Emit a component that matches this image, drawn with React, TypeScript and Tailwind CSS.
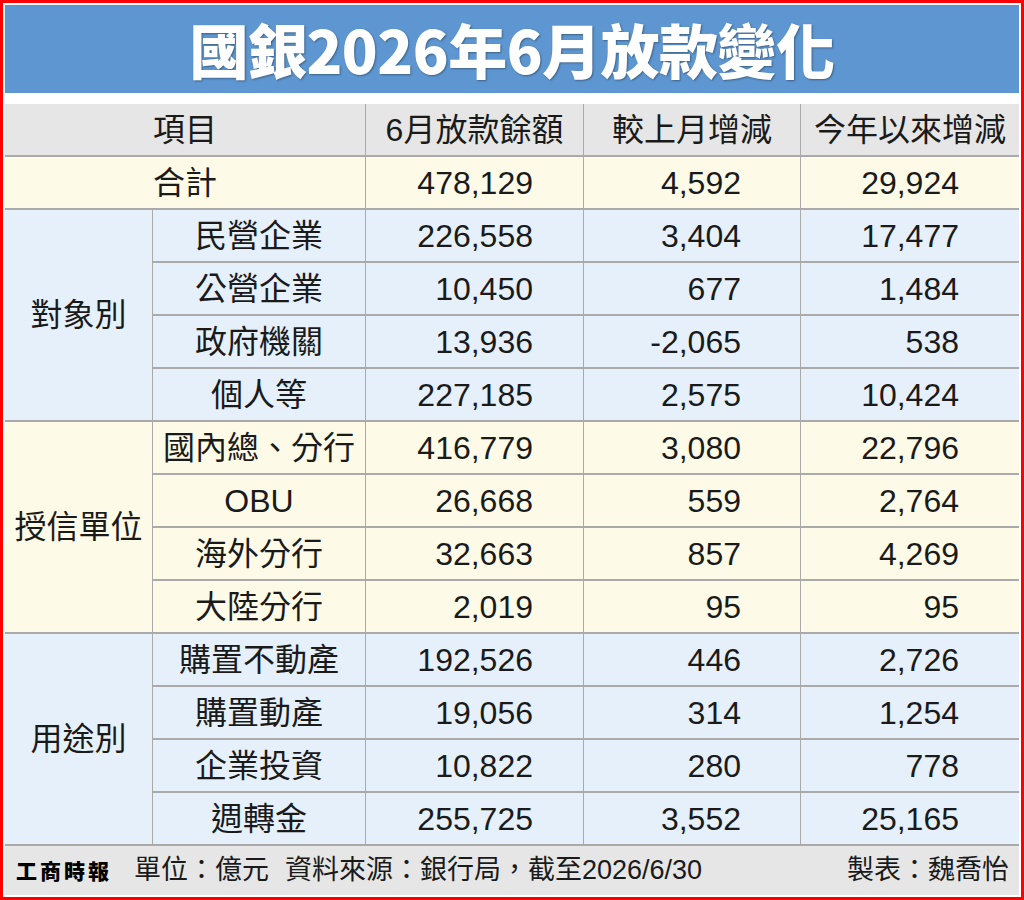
import React from "react";

type Row = [string, string, string, string];

const groups: { label: string; bg: string; rows: Row[] }[] = [
  {
    label: "對象別",
    bg: "bg-[#e6f0fa]",
    rows: [
      ["民營企業", "226,558", "3,404", "17,477"],
      ["公營企業", "10,450", "677", "1,484"],
      ["政府機關", "13,936", "-2,065", "538"],
      ["個人等", "227,185", "2,575", "10,424"],
    ],
  },
  {
    label: "授信單位",
    bg: "bg-[#fdfbe7]",
    rows: [
      ["國內總、分行", "416,779", "3,080", "22,796"],
      ["OBU", "26,668", "559", "2,764"],
      ["海外分行", "32,663", "857", "4,269"],
      ["大陸分行", "2,019", "95", "95"],
    ],
  },
  {
    label: "用途別",
    bg: "bg-[#e6f0fa]",
    rows: [
      ["購置不動產", "192,526", "446", "2,726"],
      ["購置動產", "19,056", "314", "1,254"],
      ["企業投資", "10,822", "280", "778"],
      ["週轉金", "255,725", "3,552", "25,165"],
    ],
  },
];

const font = "font-['Liberation_Sans','Noto_Sans_CJK_TC',sans-serif]";

function Nums({ bg, values }: { bg: string; values: string[] }) {
  return (
    <>
      <div className={`${bg} flex items-center justify-end pr-[50px]`}>{values[0]}</div>
      <div className={`${bg} flex items-center justify-end pr-[59px]`}>{values[1]}</div>
      <div className={`${bg} flex items-center justify-end pr-[60px]`}>{values[2]}</div>
    </>
  );
}

export default function App() {
  return (
    <div className={`${font} flex h-[900px] w-[1024px] flex-col border-[3px] border-[#f00] bg-white p-[2px] text-[#1a1a1a]`}>
      <div className="flex h-[88px] shrink-0 items-center justify-center bg-[#5d96d0]">
        <h1 className="font-['Noto_Sans_CJK_TC',sans-serif] text-[59px] font-black tracking-[-0.5px] text-white [text-shadow:1px_1px_2px_rgba(0,0,0,0.35)]">
          國銀2026年6月放款變化
        </h1>
      </div>

      <div className="mt-[11px] grid auto-rows-[51px] grid-cols-[147px_212px_217px_216px_1fr] gap-x-px gap-y-[2px] bg-[#aaaaaa] text-[32px] leading-none">
        <div className="col-span-2 flex items-center justify-center bg-[#e6e6e6]">項目</div>
        <div className="flex items-center justify-center bg-[#e6e6e6]">6月放款餘額</div>
        <div className="flex items-center justify-center bg-[#e6e6e6]">較上月增減</div>
        <div className="flex items-center justify-center bg-[#e6e6e6]">今年以來增減</div>

        <div className="col-span-2 flex items-center justify-center bg-[#fdfbe7]">合計</div>
        <Nums bg="bg-[#fdfbe7]" values={["478,129", "4,592", "29,924"]} />

        {groups.map((g) => (
          <React.Fragment key={g.label}>
            <div className={`${g.bg} row-span-4 flex items-center justify-center`}>{g.label}</div>
            {g.rows.map((r) => (
              <React.Fragment key={r[0]}>
                <div className={`${g.bg} flex items-center justify-center`}>{r[0]}</div>
                <Nums bg={g.bg} values={r.slice(1)} />
              </React.Fragment>
            ))}
          </React.Fragment>
        ))}
      </div>

      <div className="flex flex-1 items-center border-t-2 border-[#aaaaaa] bg-[#e6e6e6] pl-[11px] pr-[10px] text-[27px]">
        <span className="font-['Noto_Sans_CJK_TC',serif] text-[21px] font-black tracking-[3px] text-black">工商時報</span>
        <span className="ml-[22px]">單位：億元</span>
        <span className="ml-[16px]">資料來源：銀行局，截至2026/6/30</span>
        <span className="ml-auto">製表：魏喬怡</span>
      </div>
    </div>
  );
}
